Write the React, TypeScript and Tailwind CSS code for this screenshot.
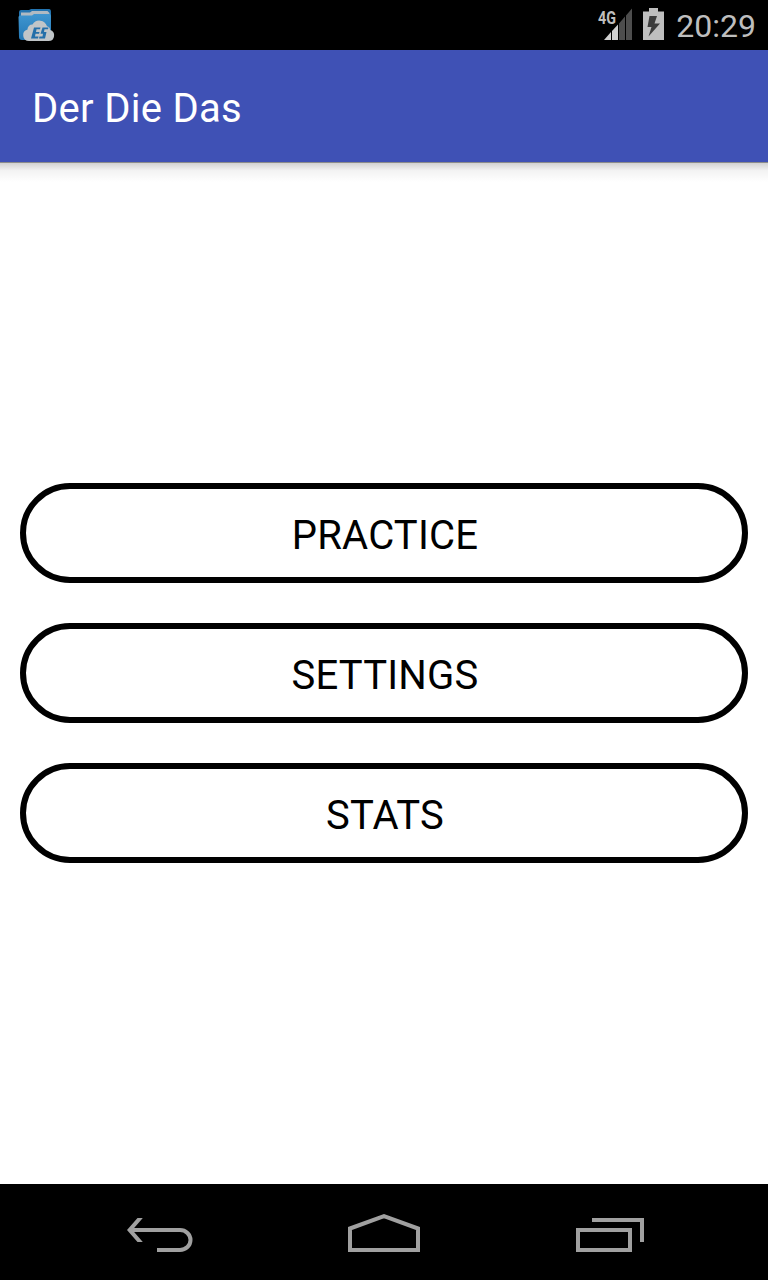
import React from "react";

const MENU = ["Practice", "Settings", "Stats"];

function FileExplorerIcon() {
  return (
    <svg width="37" height="34" viewBox="0 0 37 34" aria-hidden="true">
      <defs>
        <linearGradient id="folder" x1="0" y1="0" x2="0" y2="1">
          <stop offset="0" stopColor="#3f96d0" />
          <stop offset="1" stopColor="#2478b6" />
        </linearGradient>
      </defs>
      <path d="M1 4Q1 2 3 2H11L13 1H31Q33 1 33 4V12H1Z" fill="#2374b0" />
      <path d="M3 4.500H12L14 3H29.500L31.500 5V9H3Z" fill="#b0bac2" />
      <path d="M0.500 9Q0.500 7.500 2.500 7.500H14L16 6H31Q33 6 33 8V29Q33 32 30 32H4Q1 32 1 29Z" fill="url(#folder)" />
      <path d="M11 33A5.800 5.800 0 0 1 9.500 21.600A4.800 4.800 0 0 1 14.500 16.500A8 8 0 0 1 29 18.300Q32 19 32 22A5.600 5.600 0 0 1 30.500 33Z" fill="#c0c5c8" />
      <path d="M16 19.500H22.500L22 21.300H18.500L18 24H21.500L21 25.800H17.500L17 28.500H20.500L20 30.500H13Z" fill="#246fa9" />
      <path d="M24.500 19.500H30.500L30 21.300H26.500L26 24H28.500L27 30.500H21L21.500 28.600H24.500L25 25.800H22.500Z" fill="#246fa9" />
    </svg>
  );
}

function SignalIcon() {
  return (
    <svg className="overflow-visible" width="35" height="34" viewBox="597 8 35 34" aria-hidden="true">
      <text x="598" y="23.500" textLength="18" lengthAdjust="spacingAndGlyphs" fill="#bebebe" fontFamily="Roboto, sans-serif" fontSize="18" fontWeight="700">4G</text>
      <path d="M604 40L611 32V40Z" fill="#d0d0d0" />
      <path d="M612 40V31L618 24.500V40Z" fill="#d0d0d0" />
      <path d="M619 40V23.500L625 16.500V40ZM626 40V15.500L632 8.500V40Z" fill="#4d4d4d" />
    </svg>
  );
}

function BatteryIcon() {
  return (
    <svg width="21" height="34" viewBox="0 0 21 34" aria-hidden="true">
      <path d="M6 0H15V3.500H21V32H0V3.500H6Z" fill="#bebebe" />
      <path d="M6.500 8H14L11.500 15.500H17L5.500 28.500L8.500 19H4.500Z" fill="#3c3c3c" />
    </svg>
  );
}

function StatusBar() {
  return (
    <div className="flex h-[50px] shrink-0 items-center bg-black pl-[18px] pr-3">
      <FileExplorerIcon />
      <div className="ml-auto flex items-center">
        <SignalIcon />
        <div className="ml-[11px]"><BatteryIcon /></div>
        <span className="ml-3 mt-0.5 text-[32px] leading-[48px] text-[#bebebe]">20:29</span>
      </div>
    </div>
  );
}

function NavigationBar() {
  return (
    <nav className="flex h-24 shrink-0 items-center justify-between bg-black pl-[126px] pr-[124px] pt-0.5">
      <button aria-label="Back">
        <svg className="block" width="68" height="40" viewBox="126 1213 68 40" fill="none" stroke="#a0a0a0" strokeWidth="4">
          <path d="M130 1230H180A10.500 10 0 0 1 180 1250H157" />
          <path d="M137.500 1218H142.800L132.400 1230L142.800 1242H137.500L127 1230Z" fill="#a0a0a0" stroke="none" />
        </svg>
      </button>
      <button aria-label="Home" className="mr-0.5">
        <svg className="block" width="72" height="40" viewBox="348 1213 72 40" fill="none" stroke="#a0a0a0" strokeWidth="4">
          <path d="M350 1228.500L384 1216.200L418 1228.500V1250H350Z" />
        </svg>
      </button>
      <button aria-label="Recent apps">
        <svg className="block" width="68" height="40" viewBox="576 1213 68 40" fill="none" stroke="#a0a0a0" strokeWidth="4">
          <path d="M578 1230H630V1250H578ZM592 1220H642V1242" />
        </svg>
      </button>
    </nav>
  );
}

export default function App() {
  return (
    <div className="flex h-[1280px] w-[768px] flex-col bg-white font-[Roboto,sans-serif]">
      <StatusBar />
      <header className="flex h-28 shrink-0 items-center bg-[#3f51b5] pl-8 pt-1.5">
        <h1 className="text-[40px] leading-[48px] tracking-[0.3px] text-white">Der Die Das</h1>
      </header>
      <div className="h-px shrink-0 bg-[#8b8b8b]" />
      <div className="-mb-5 h-[19px] shrink-0 bg-linear-to-b from-[#d2d2d2] via-[#f3f3f3] via-40% to-white" />
      <main className="flex flex-1 flex-col justify-center gap-10 px-5">
        {MENU.map((label) => (
          <button key={label} className="flex h-[100px] items-center justify-center rounded-full border-[6px] border-black pl-0.5 pt-1.5 text-[40px] leading-[48px] tracking-[0.2px] text-black uppercase">
            {label}
          </button>
        ))}
      </main>
      <NavigationBar />
    </div>
  );
}
